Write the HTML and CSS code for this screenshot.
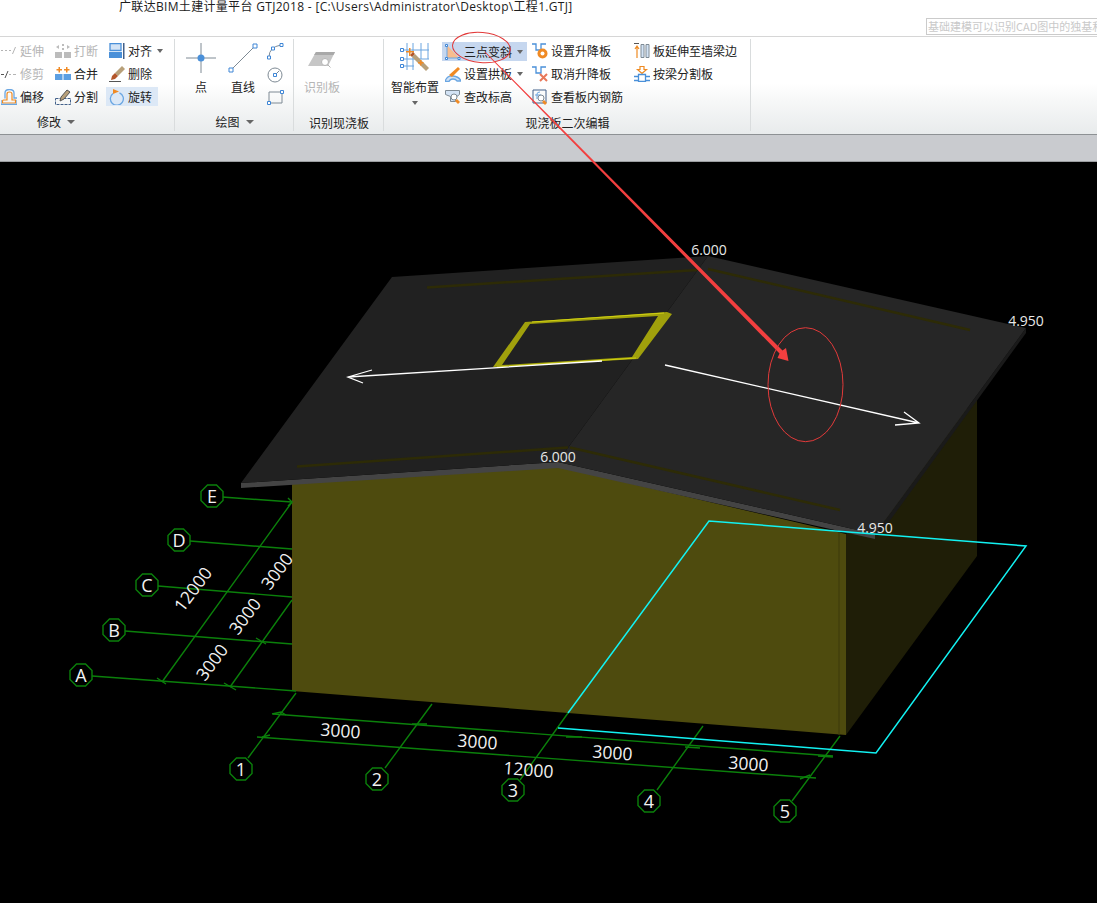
FILE: index.html
```html
<!DOCTYPE html>
<html lang="zh-CN">
<head>
<meta charset="utf-8">
<title>广联达BIM土建计量平台 GTJ2018</title>
<link rel="stylesheet" href="styles.css">
</head>
<body>
<div class="app">
  <header class="titlebar">
    <div class="title">广联达BIM土建计量平台 GTJ2018 - [C:\Users\Administrator\Desktop\工程1.GTJ]</div>
    <div class="hint">基础建模可以识别CAD图中的独基和</div>
  </header>

  <section class="ribbon">
    <div class="group group-modify">
      <div class="tools modify-tools">
        <div class="tool off"><svg class="ico" viewBox="0 0 16 16"><path class="s-grey" d="M0 7.500h2M4 7.500h2M8 7.500h2M11.500 11l3-7" /></svg><span>延伸</span></div>
        <div class="tool off"><svg class="ico" viewBox="0 0 16 16"><path class="s-dark" d="M0 8.500h3M4 12l3-7"/><path class="s-grey" d="M8 8.500h2M12 8.500h3"/></svg><span>修剪</span></div>
        <div class="tool"><svg class="ico" viewBox="0 0 16 16"><path class="s-orange" d="M1.500 14V12q0-1 1-1H6V5q0-2 2.500-2T11 5v6h3.500v3z"/><path class="s-blue-light" d="M4 9.500V4q0-3.500 4.500-3.500T13 4v5h3M0 11v4.500h16V11"/></svg><span>偏移</span></div>

        <div class="tool off"><svg class="ico" viewBox="0 0 16 16"><path class="f-grey" d="M0 9h7v6H0zM9 9h7v6H9z"/><path class="f-grey" d="M1 4l3-2v4zM15 4l-3-2v4zM7 1h2v2H7zM7 5h2v2H7z"/></svg><span>打断</span></div>
        <div class="tool"><svg class="ico" viewBox="0 0 16 16"><path class="f-sky" d="M0 8h7.500v6H0zM8.500 8H16v6H8.500z"/><path class="f-orange" d="M3.500 1h1.500v2h2v1.500h-2v2H3.500v-2h-2V3h2zM11 1h1.500v2h2v1.500h-2v2H11v-2H9V3h2z"/></svg><span>合并</span></div>
        <div class="tool"><svg class="ico" viewBox="0 0 16 16"><path class="s-navy-dash" d="M.5 9.500h15v6H.5z"/><path class="f-tan" d="M12 1l3 2-6 7-4 2 1-4z"/><path class="s-dark" d="M12 1l3 2-6 7-4 2 1-4z"/></svg><span>分割</span></div>

        <div class="tool caret-tool"><svg class="ico" viewBox="0 0 16 16"><path class="f-pale s-blue" d="M1 .5h11v7H1z"/><path class="f-blue" d="M0 9h13v6H0z"/><path class="f-navy" d="M14 0h1.500v16H14z"/></svg><span>对齐</span><i class="caret"></i></div>
        <div class="tool"><svg class="ico" viewBox="0 0 16 16"><path class="f-tan" d="M13 0l3 3-7 7-3-3z"/><path class="f-rust" d="M6 7l3 3-3 3-4 1 1-4z"/><path class="s-dark" d="M0 15.500h12"/></svg><span>删除</span></div>
        <div class="tool active"><svg class="ico" viewBox="0 0 16 16"><path class="s-blue-light" d="M10.500 3.800A6.500 6.500 0 1 1 4 4.500"/><path class="f-orange" d="M4 0l6 2.500L4 5z"/></svg><span>旋转</span></div>
      </div>
      <div class="group-title with-caret">修改<i class="caret"></i></div>
    </div>

    <div class="group group-draw">
      <div class="tools draw-tools">
        <div class="big big-point"><svg class="ico-big" viewBox="0 0 30 30"><path class="s-slate" d="M15 0v12M15 18v12M0 15h12M18 15h12"/><circle class="f-blue" cx="15" cy="15" r="3.500"/></svg><span>点</span></div>
        <div class="big big-line"><svg class="ico-big" viewBox="0 0 30 30"><path class="s-slate" d="M3 27L27 3"/><path class="s-handle" d="M1 25h4v4H1zM25 1h4v4h-4z"/></svg><span>直线</span></div>
        <div class="small-col">
          <svg class="ico-s" viewBox="0 0 17 17"><path class="s-slate" d="M2 14Q2 4 14 2"/><path class="s-handle" d="M.5 13h3v3h-3zM13 .5h3v3h-3zM4.500 4h3v3h-3z"/></svg>
          <svg class="ico-s" viewBox="0 0 17 17"><circle class="s-slate" cx="8" cy="9" r="7"/><path class="s-slate" d="M8 9l4-4"/><path class="s-handle" d="M6.500 7.500h3v3h-3z"/></svg>
          <svg class="ico-s" viewBox="0 0 17 17"><path class="s-slate" d="M2 3h13v11H2z"/><path class="s-handle" d="M.5 12.500h3v3h-3zM13.500 1.500h3v3h-3z"/></svg>
        </div>
      </div>
      <div class="group-title with-caret">绘图<i class="caret"></i></div>
    </div>

    <div class="group group-recog">
      <div class="tools recog-tools">
        <div class="big off"><svg class="ico-big" viewBox="0 0 30 30"><path class="f-silver" d="M9 9h19l-7 14H1z"/><path class="f-ash" d="M9 9h19l-1.500 3H7z"/><circle class="f-white s-grey" cx="18" cy="19" r="3.500"/><path class="s-grey" d="M20.500 21.500l3 3"/></svg><span>识别板</span></div>
      </div>
      <div class="group-title">识别现浇板</div>
    </div>

    <div class="group group-edit">
      <div class="tools edit-tools">
        <div class="big big-smart">
          <svg class="ico-big" viewBox="0 0 30 30"><path class="s-blue-thin" d="M3 7h26M3 16h26M3 23h11M7 0v27M13 0v27M21 0v16M28 0v16"/><path class="s-handle" d="M.5 5.500h3v3h-3zM.5 14.500h3v3h-3zM.5 21.500h3v3h-3z"/><path class="f-rust" d="M10 12l3-3 2 2-3 3z"/><path class="f-tan" d="M12 14l3-3 14 14-3 3z"/><path class="f-orange" d="M9 5h1.500v3H14v1.500h-3.500V13H9V9.500H6V8h3zM20 17h1.500v2h2v1.500h-2v2H20v-2h-2V19h2z"/></svg>
          <span>智能布置</span><i class="caret caret-under"></i>
        </div>
        <div class="edit-grid">
          <div class="tool selected"><svg class="ico" viewBox="0 0 16 16"><path class="f-peach" d="M2 1l12 13H2z"/><path class="s-blue-thin" d="M2 1v13h12"/><path class="s-handle" d="M.5.500h2v2h-2zM.5 13.500h2v2h-2zM13 13.500h2v2h-2z"/></svg><span>三点变斜</span><i class="caret"></i></div>
          <div class="tool"><svg class="ico" viewBox="0 0 16 16"><path class="f-pale s-blue-light" d="M0 15.500q2-6 8-5.500t8 5h-4q-1-2-4-2t-4 2.500z"/><path class="f-orange" d="M4 9l9-8 2 2-8 8z"/></svg><span>设置拱板</span><i class="caret"></i></div>
          <div class="tool"><svg class="ico" viewBox="0 0 16 16"><path class="f-pale s-slate" d="M.5 1.500h14v4l-4 3v4h-5v-5L.5 5.500z"/><circle class="f-white s-slate" cx="9" cy="8" r="3"/><path class="f-orange" d="M12 10l3 3-2 2-3-3z"/></svg><span>查改标高</span></div>

          <div class="tool"><svg class="ico" viewBox="0 0 16 16"><path class="s-blue" d="M0 1h4v6h5V1h5"/><circle class="f-orange" cx="10.500" cy="10.500" r="5"/><circle class="f-white" cx="10.500" cy="10.500" r="2"/></svg><span>设置升降板</span></div>
          <div class="tool"><svg class="ico" viewBox="0 0 16 16"><path class="s-blue" d="M0 1h4v6h5V1h5"/><path class="s-orange-w" d="M8 8l7 7M15 8l-7 7"/></svg><span>取消升降板</span></div>
          <div class="tool"><svg class="ico" viewBox="0 0 16 16"><path class="s-navy" d="M1 1h13v13H1z"/><path class="s-blue-thin" d="M5 10V5q0-2 3-2M3 6h6"/><circle class="f-white s-slate" cx="9" cy="9" r="3"/><path class="f-orange" d="M12 11l3 3-2 2-3-3z"/></svg><span>查看板内钢筋</span></div>

          <div class="tool"><svg class="ico" viewBox="0 0 16 16"><path class="s-dark" d="M0 .5h5"/><path class="s-orange" d="M3 15V3M1 6l2-3 2 3"/><path class="f-pale s-slate" d="M7 1.500h3v13H7zM12 1.500h3v13h-3z"/></svg><span>板延伸至墙梁边</span></div>
          <div class="tool"><svg class="ico" viewBox="0 0 16 16"><path class="f-white s-orange" d="M6 .5h4v3h2.500L8 7.500 3.500 3.500H6z"/><path class="s-blue" d="M4.500 8.500h7v7h-7zM0 10.500h4.500M11.500 10.500H16M0 14.500h4.500M11.500 14.500H16"/></svg><span>按梁分割板</span></div>
        </div>
      </div>
      <div class="group-title">现浇板二次编辑</div>
    </div>
    <div class="ribbon-rest"></div>
  </section>

  <div class="band"></div>

  <main class="viewport">
    <svg class="scene" viewBox="0 162 1097 741">
      <defs>
        <polygon id="oct" points="-4.500,-11 4.500,-11 11,-4.500 11,4.500 4.500,11 -4.500,11 -11,4.500 -11,-4.500"/>
      </defs>

      <polygon class="wall-side" points="846,534 977,398 977,556 846,735"/>
      <polygon class="wall-front" points="292,484 556,466 846,534 846,735 292,691"/>
      <path class="wall-seam" d="M839 530V735"/>

      <polygon class="roof-edge" points="241,483 558,462 875,534 875,539 558,468 241,488"/>
      <polygon class="roof-side" points="1026,328 1026,333 878,537 875,534"/>
      <polygon class="roof-left" points="392,277 708,256 570,445 558,462 241,483"/>
      <polygon class="roof-right" points="708,256 1026,328 875,534 558,462 570,445"/>

      <path class="rail" d="M427 287.500L697 270M708 269L970 330M297 466.500L568 447.500M570 447.500L840 510"/>
      <path class="frame" fill-rule="evenodd" d="M525 322L667 312L672 314L638 359L493 367ZM530 324L502 365L632 357L658 316Z"/>
      <path class="glint" d="M532 322L664 313M497 367L636 358"/>

      <path class="arrow" d="M602 361L348 377M372 370L348 377L363 383M665 365L919 423M904 412L919 423L895 425"/>

      <text class="elev" x="709" y="255">6.000</text>
      <text class="elev" x="558" y="462">6.000</text>
      <text class="elev" x="1026" y="326">4.950</text>
      <text class="elev" x="875" y="533">4.950</text>

      <path class="axis" d="M222 497L292 502M190 541L292 549M158 586L292 597M125 631L292 644M92 676L296 691"/>
      <path class="axis" d="M292 502L162 682M292 600L230 687"/>
      <path class="axis" d="M296 693L248 758M432 704L385 768M568 713L520 780M703 726L657 790M840 736L792 801"/>
      <path class="axis" d="M273 714L833 756M257 737L816 778"/>
      <path class="axis" d="M288 498L292 502L288 506M157 678L166 684M224 683L236 690M256 638L266 644M286 715L281 712L272 714M427 724L412 724M582 737L566 737M700 748L685 747M833 757L818 756M270 735L262 737M810 775L800 779"/>

      <path class="cyan" d="M568 713L709 521L1026 546L876 753L558 728"/>

      <g class="bubble">
        <use href="#oct" x="212" y="496"/><use href="#oct" x="179" y="540"/><use href="#oct" x="147" y="585"/><use href="#oct" x="114" y="630"/><use href="#oct" x="81" y="675"/>
        <use href="#oct" x="241" y="769"/><use href="#oct" x="377" y="779"/><use href="#oct" x="513" y="790"/><use href="#oct" x="649" y="801"/><use href="#oct" x="785" y="811"/>
      </g>
      <g class="axis-label">
        <text x="212" y="502.500">E</text><text x="179" y="546.500">D</text><text x="147" y="591.500">C</text><text x="114" y="636.500">B</text><text x="81" y="681.500">A</text>
        <text x="241" y="775.500">1</text><text x="377" y="785.500">2</text><text x="513" y="796.500">3</text><text x="649" y="807.500">4</text><text x="785" y="817.500">5</text>
      </g>

      <g class="dim">
        <text transform="translate(340 737) rotate(4.300)">3000</text>
        <text transform="translate(477 748) rotate(4.300)">3000</text>
        <text transform="translate(612 759) rotate(4.300)">3000</text>
        <text transform="translate(748 770) rotate(4.300)">3000</text>
        <text transform="translate(528 776) rotate(4.300)">12000</text>
        <text transform="translate(217 666) rotate(-53)">3000</text>
        <text transform="translate(250 620) rotate(-53)">3000</text>
        <text transform="translate(282 575) rotate(-53)">3000</text>
        <text transform="translate(198 593) rotate(-53)">12000</text>
      </g>
    </svg>
  </main>

  <svg class="annot" viewBox="0 0 1097 903">
    <ellipse class="mark" cx="481.500" cy="47.500" rx="29" ry="15" transform="rotate(5 481 47)"/>
    <polygon class="pointer" points="484.700,52.300 485.300,51.700 782.500,350.500 786,348 788.500,361 777.500,358 779.500,353.500"/>
    <ellipse class="mark" cx="805.500" cy="384.700" rx="37.500" ry="57"/>
  </svg>
</div>
</body>
</html>
```
FILE: styles.css
```css
* { box-sizing: border-box; }

html, body {
  margin: 0;
  padding: 0;
  background: #000;
}

body {
  font-family: "Noto Sans CJK SC", "Open Sans", sans-serif;
  font-size: 12px;
  color: #222;
}

.app {
  position: relative;
  width: 1097px;
  height: 903px;
  display: flex;
  flex-direction: column;
  overflow: hidden;
}

/* title bar */
.titlebar {
  height: 36px;
  flex: none;
  display: flex;
  background: #fff;
}

.title {
  margin-left: 119px;
  font-family: "Open Sans", "Noto Sans CJK SC", sans-serif;
  font-size: 12px;
  line-height: 14px;
  white-space: nowrap;
  color: #1c1c1c;
  letter-spacing: 0.32px;
}

.hint {
  margin-left: auto;
  margin-top: 18px;
  width: 171px;
  height: 17px;
  flex: none;
  padding-left: 1px;
  border: 1px solid #cbcbcb;
  border-right: 0;
  font-size: 11px;
  line-height: 15px;
  color: #c9c9c9;
  white-space: nowrap;
  overflow: hidden;
}

/* ribbon */
.ribbon {
  height: 99px;
  flex: none;
  display: flex;
  border-top: 1px solid #d6d6d6;
  border-bottom: 1px solid #8d9194;
  background: linear-gradient(#fff 0, #fff 48%, #f7f8f8 65%, #e8ebec 100%);
}

.group {
  flex: none;
  display: flex;
  flex-direction: column;
  padding-top: 3px;
  position: relative;
}

.group::after {
  content: "";
  position: absolute;
  right: 0;
  top: 2px;
  bottom: 3px;
  width: 1px;
  background: #d9dcdd;
}

.group-modify { width: 175px; }
.group-draw { width: 119px; }
.group-recog { width: 90px; }
.group-edit { width: 367px; }
.ribbon-rest { flex: 1; }

.tools { height: 69px; flex: none; }

.modify-tools {
  display: grid;
  grid-template-columns: 54px 54px 54px;
  grid-template-rows: repeat(3, 23px);
  grid-auto-flow: column;
  padding-left: 1px;
  margin-top: -1px;
  margin-bottom: 1px;
}

.draw-tools {
  display: flex;
  padding-left: 11px;
}

.recog-tools {
  display: flex;
  padding-left: 10px;
}

.edit-tools {
  display: flex;
  padding-left: 7px;
}

.edit-grid {
  display: grid;
  margin-left: 6px;
  margin-top: -1px;
  grid-template-columns: 87px 102px 110px;
  grid-template-rows: repeat(3, 23px);
  grid-auto-flow: column;
}

.group-title {
  flex: 1;
  display: flex;
  align-items: center;
  justify-content: center;
  padding-top: 3px;
  line-height: 16px;
  color: #222;
}

.group-title.with-caret { padding-top: 0; }
.group-modify .group-title { justify-content: flex-start; padding-left: 37px; }

/* tools */
.tool {
  display: flex;
  align-items: center;
  gap: 3px;
  white-space: nowrap;
  line-height: 16px;
}

.tool.off, .big.off { color: #b5b5b5; }

.tool.active {
  align-self: center;
  justify-self: start;
  height: 19px;
  margin-left: -3px;
  padding: 0 6px 0 3px;
  background: #dce8f6;
}

.tool.selected {
  align-self: start;
  margin-top: 3px;
  height: 19px;
  width: 85px;
  margin-left: -3px;
  padding-left: 3px;
  background: #c6d7ef;
}

.caret {
  width: 0;
  height: 0;
  margin-left: 2px;
  border-left: 3.5px solid transparent;
  border-right: 3.5px solid transparent;
  border-top: 4px solid #666;
}

.group-title .caret { margin-left: 6px; border-left-width: 4px; border-right-width: 4px; }
.caret-under { margin: 5px 0 0; }

.ico { width: 16px; height: 16px; flex: none; }
.ico-big { width: 30px; height: 30px; flex: none; }
.ico-s { width: 17px; height: 17px; display: block; }

.big {
  display: flex;
  flex-direction: column;
  align-items: center;
  padding-top: 3px;
  line-height: 18px;
  white-space: nowrap;
}

.big .ico-big { margin-bottom: 5px; }

.big-point { width: 30px; }
.big-line { width: 30px; margin-left: 12px; }
.small-col {
  display: flex;
  flex-direction: column;
  gap: 6px;
  margin-left: 9px;
  padding-top: 3px;
}
.big-smart { width: 48px; }

/* icon paints */
svg path, svg circle { fill: none; }
svg .s-grey { stroke: #b4b4b4; stroke-width: 1; }
svg .s-dark { stroke: #555; stroke-width: 1; }
svg .s-blue { stroke: #4a90d9; stroke-width: 1.300; }
svg .s-blue-light { stroke: #6aa6e2; stroke-width: 1.300; }
svg .s-blue-thin { stroke: #6ba5e0; stroke-width: 1; }
svg .s-navy { stroke: #42608a; stroke-width: 1; }
svg .s-navy-dash { stroke: #42608a; stroke-width: 1; stroke-dasharray: 3 1; }
svg .s-slate { stroke: #7e8a94; stroke-width: 1; }
svg .s-handle { stroke: #3f86d6; stroke-width: 1; fill: #fff; }
svg .s-orange { stroke: #ee8a22; stroke-width: 1.200; }
svg .s-orange-w { stroke: #e8785a; stroke-width: 2; }
svg .f-grey { fill: #bcbcbc; }
svg .f-blue { fill: #4a90d9; }
svg .f-sky { fill: #5c9fe2; }
svg .f-navy { fill: #42608a; }
svg .f-pale { fill: #d3e3f5; }
svg .f-orange { fill: #f08a24; }
svg .f-peach { fill: #f8bd8e; }
svg .f-tan { fill: #b8a079; }
svg .f-rust { fill: #b4562a; }
svg .f-silver { fill: #c6c6c6; }
svg .f-ash { fill: #a9a9a9; }
svg .f-white { fill: #fff; }

/* band */
.band {
  height: 27px;
  flex: none;
  background: #c9cbcf;
  border-bottom: 1px solid #9c9ea1;
}

/* 3D viewport */
.viewport {
  flex: 1;
  background: #000;
  min-height: 0;
}

.scene {
  display: block;
  width: 1097px;
  height: 741px;
  font-family: "Open Sans", sans-serif;
}

.wall-side { fill: #1f1e07; }
.wall-front { fill: #4e4b0e; }
.wall-seam { stroke: #3c3a0b; stroke-width: 1; }
.roof-edge { fill: #444; }
.roof-side { fill: #1a1a1a; }
.roof-left { fill: #212121; }
.roof-right { fill: #262626; }
.scene .rail { stroke: #2d2b06; stroke-width: 2.500; }
.scene .frame { fill: #a0a00c; }
.scene .glint { stroke: #cfcf12; stroke-width: 1; }
.scene .arrow { stroke: #fff; stroke-width: 1.300; }
.scene .axis { stroke: #0b800b; stroke-width: 1.400; }
.scene .cyan { stroke: #12f2f2; stroke-width: 1.500; }
.bubble use { fill: #000; stroke: #0b800b; stroke-width: 1.400; }

.elev {
  fill: #e8e8e8;
  font-size: 14px;
  text-anchor: middle;
}

.axis-label text {
  fill: #f2f2f2;
  font-size: 18px;
  text-anchor: middle;
}

.dim text {
  fill: #f2f2f2;
  font-size: 17.500px;
  text-anchor: middle;
}

/* hand-drawn annotations */
.annot {
  position: absolute;
  left: 0;
  top: 0;
  width: 1097px;
  height: 903px;
  pointer-events: none;
}

.mark { fill: none; stroke: #e23a3a; stroke-width: 1; }
.pointer { fill: #f23f3f; }
```
